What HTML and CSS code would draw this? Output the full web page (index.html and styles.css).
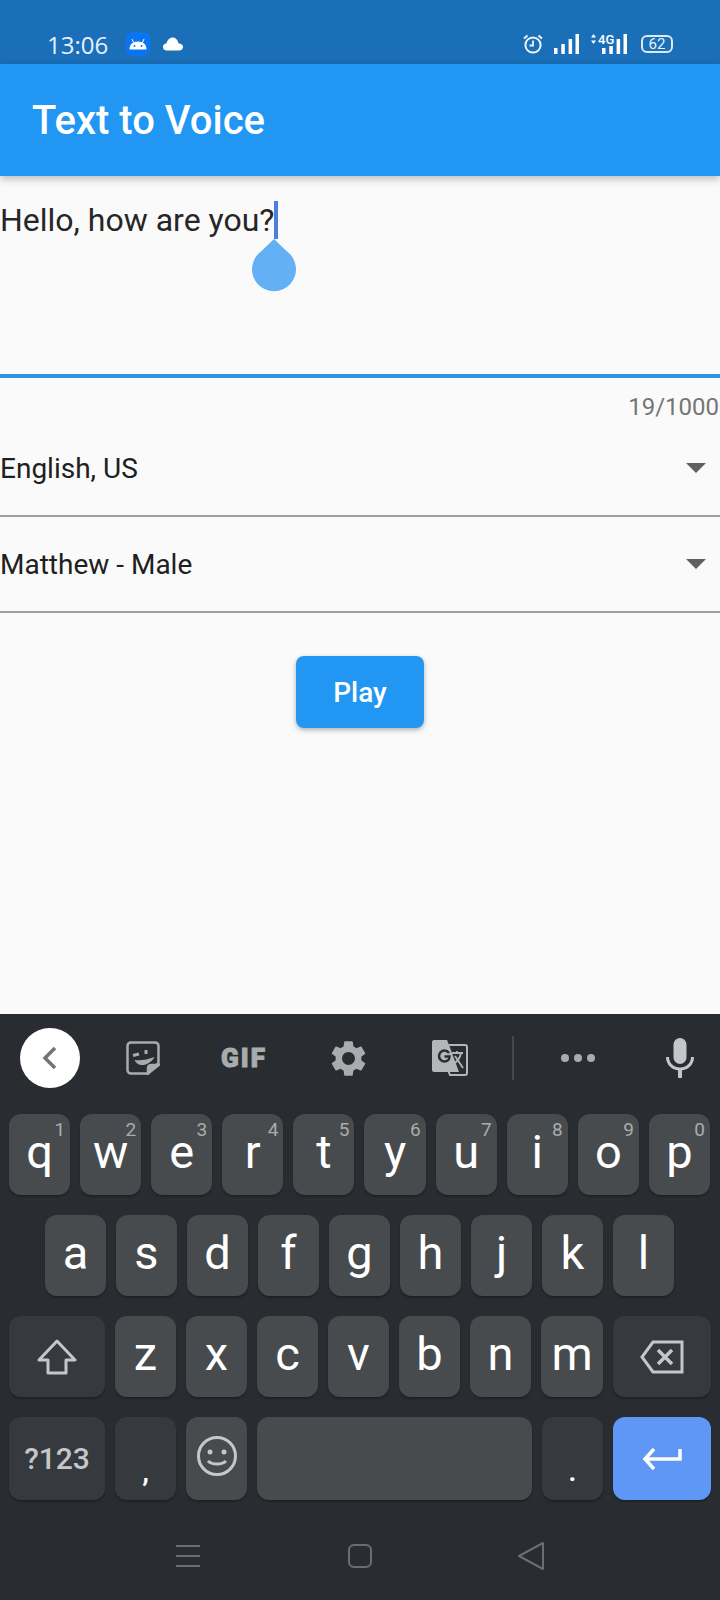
FILE: index.html
```html
<!DOCTYPE html>
<html lang="en">
<head>
    <meta charset="UTF-8">
    <meta name="viewport" content="width=device-width, initial-scale=1.0">
    <title>Text to Voice</title>
    <link rel="stylesheet" href="styles.css">
</head>
<body>
    <div class="status-bar">
        <span class="clock">13:06</span>
        <span class="droid-badge">
            <svg width="18" height="12" viewBox="0 0 18 12"><path d="M0.500 11.500C0.500 6.500 3.500 3.500 9 3.500S17.500 6.500 17.500 11.500Z" fill="#fff"/><path d="M4.500 4.500 3 1M13.500 4.500 15 1" stroke="#fff" stroke-width="1"/><circle cx="5.500" cy="8" r="1" fill="#0b74f1"/><circle cx="12.500" cy="8" r="1" fill="#0b74f1"/></svg>
        </span>
        <svg class="cloud" width="22" height="14" viewBox="0 0 24 16"><path d="M5 15.500C2 15.500 0.500 13.500 0.500 11.500C0.500 9 2 7.500 4.500 7.300C5.500 3 8.500 0.500 11.500 0.500C15 0.500 17.500 3.500 18.300 7.200C21.500 7.500 23.500 9 23.500 11.500C23.500 13.500 21.500 15.500 19 15.500Z" fill="#fff"/></svg>
        <span class="status-right">
            <svg width="20" height="20" viewBox="0 0 20 20" fill="none" stroke="#eef4f9" stroke-width="2"><circle cx="10" cy="11" r="7.600"/><path d="M10 6.500V11.500H6.500" stroke-width="1.800"/><path d="M1 4.500 4.500 1.500M19 4.500 15.500 1.500" stroke-width="2"/></svg>
            <svg class="bars" width="25" height="20" viewBox="0 0 25 20" fill="#fff"><rect x="0" y="14" width="3.500" height="6"/><rect x="7.300" y="10" width="3.500" height="10"/><rect x="14.600" y="5" width="3.500" height="15"/><rect x="21.500" y="0" width="3.500" height="20"/></svg>
            <span class="net">
                <svg class="net-arrows" width="5" height="10" viewBox="0 0 5 10" fill="#fff"><path d="M2.500 0 5 3.500H0Z"/><path d="M2.500 10 5 6.500H0Z"/></svg>
                <span class="net-label">4G</span>
                <svg class="net-bars" width="25" height="20" viewBox="0 0 25 20" fill="#fff"><rect x="0" y="14" width="3.500" height="6"/><rect x="7.300" y="12" width="3.500" height="8"/><rect x="14.600" y="5" width="3.500" height="15"/><rect x="21.500" y="0" width="3.500" height="20"/></svg>
            </span>
            <span class="battery"><span class="battery-level">62</span></span>
        </span>
    </div>

    <header class="app-bar">Text to Voice</header>

    <main class="content">
        <div class="text-field">
            <span class="typed">Hello, how are you?</span>
            <span class="caret"></span>
            <svg class="handle" width="44" height="54" viewBox="0 0 44 54"><path d="M22 0 35 12.500A22 22 0 1 1 9 12.500Z" fill="#64b0f4"/></svg>
        </div>
        <div class="counter">19/1000</div>
        <div class="dropdown"><span>English, US</span><span class="arrow"></span></div>
        <div class="dropdown"><span>Matthew - Male</span><span class="arrow"></span></div>
        <div class="play-row"><button class="play" type="button">Play</button></div>
    </main>

    <section class="keyboard">
        <div class="toolbar">
            <span class="tool"><span class="back-circle">
                <svg width="18" height="26" viewBox="0 0 18 26" fill="none" stroke="#70757a" stroke-width="3.500"><path d="M15 3 5 13 15 23"/></svg>
            </span></span>
            <span class="tool">
                <svg width="34" height="34" viewBox="0 0 34 34" fill="none" stroke="#a9acaf" stroke-width="2.500"><path d="M22 32.500H5C3 32.500 1.500 31 1.500 29V5C1.500 3 3 1.500 5 1.500H29C31 1.500 32.500 3 32.500 5V22Z"/><path d="M22 32.500V27C22 25 24 24 26 24H32.500L22 32.500Z" fill="#a9acaf"/><path d="M7 14.500 13 13M20 9V13" stroke-width="3"/><path d="M8.500 19C14 20 22 18.500 28.500 16C26 21 20 24.500 15 24C12 23.500 10 22 8.500 19Z" fill="#a9acaf" stroke="none"/></svg>
            </span>
            <span class="tool gif">GIF</span>
            <span class="tool">
                <svg width="43" height="43" viewBox="0 0 24 24" fill="#a9acaf"><path d="M19.140 12.940c.040-.300.060-.610.060-.940 0-.320-.020-.640-.070-.940l2.030-1.580c.180-.140.230-.410.120-.610l-1.920-3.320c-.120-.220-.370-.290-.590-.220l-2.390.960c-.500-.380-1.030-.700-1.620-.940l-.360-2.540c-.040-.240-.240-.410-.480-.410h-3.840c-.240 0-.430.170-.470.410l-.360 2.540c-.590.240-1.130.570-1.620.940l-2.390-.960c-.220-.080-.470 0-.590.220L2.740 8.870c-.120.210-.080.470.120.610l2.030 1.580c-.050.300-.090.630-.090.940s.020.640.070.940l-2.030 1.580c-.180.140-.230.410-.120.610l1.920 3.320c.120.220.370.290.590.220l2.390-.960c.500.380 1.030.700 1.620.940l.360 2.540c.050.240.240.410.480.410h3.840c.240 0 .440-.170.470-.410l.360-2.540c.590-.240 1.130-.560 1.620-.940l2.390.960c.220.080.470 0 .590-.220l1.920-3.320c.120-.220.070-.470-.120-.610l-2.010-1.580zM12 15.600c-1.980 0-3.600-1.620-3.600-3.600s1.620-3.600 3.600-3.600 3.600 1.620 3.600 3.600-1.620 3.600-3.600 3.600z"/></svg>
            </span>
            <span class="tool">
                <svg width="36" height="36" viewBox="0 0 36 36"><path d="M2 0H15L17 5 27 32H2C1 32 0 31 0 30V2C0 1 1 0 2 0Z" fill="#b4b7ba"/><path d="M17 5H33C34.500 5 35 6 35 7V33C35 34.500 34.500 35 33 35H18L16 30" fill="none" stroke="#b4b7ba" stroke-width="2"/><path d="M17 13C15.500 11 14 10.500 12.500 10.500C9.500 10.500 7 13 7 16S9.500 21.500 12.500 21.500C15.500 21.500 17.500 19.500 17.500 16.500H12.500" fill="none" stroke="#292d31" stroke-width="2.500"/><path d="M20 13H31M25 11V13M29 13C28 18 25 22 21 24M23 16 31 28" fill="none" stroke="#b4b7ba" stroke-width="1.800"/></svg>
            </span>
            <span class="tool"><span class="tool-divider"></span></span>
            <span class="tool dots"><i></i><i></i><i></i></span>
            <span class="tool tool-mic">
                <svg width="28" height="40" viewBox="0 0 28 40" fill="#c4c7ca"><rect x="7.500" y="0" width="13" height="26" rx="6.500"/><path d="M1.500 19C1.500 26 7 31 14 31S26.500 26 26.500 19" fill="none" stroke="#c4c7ca" stroke-width="3"/><rect x="12" y="30" width="4" height="10"/></svg>
            </span>
        </div>

        <div class="key-row key-row-top">
            <span class="key">q<sup>1</sup></span><span class="key">w<sup>2</sup></span><span class="key">e<sup>3</sup></span><span class="key">r<sup>4</sup></span><span class="key">t<sup>5</sup></span><span class="key">y<sup>6</sup></span><span class="key">u<sup>7</sup></span><span class="key">i<sup>8</sup></span><span class="key">o<sup>9</sup></span><span class="key">p<sup>0</sup></span>
        </div>
        <div class="key-row key-row-inset">
            <span class="key">a</span><span class="key">s</span><span class="key">d</span><span class="key">f</span><span class="key">g</span><span class="key">h</span><span class="key">j</span><span class="key">k</span><span class="key">l</span>
        </div>
        <div class="key-row">
            <span class="key key-shift key-dark">
                <svg width="40" height="36" viewBox="0 0 40 36" fill="none" stroke="#c4c7ca" stroke-width="3" stroke-linejoin="round"><path d="M20 2 38 21H29V34H11V21H2Z"/></svg>
            </span>
            <span class="key">z</span><span class="key">x</span><span class="key">c</span><span class="key">v</span><span class="key">b</span><span class="key">n</span><span class="key key-m">m</span>
            <span class="key key-action key-dark">
                <svg width="44" height="34" viewBox="0 0 44 34" fill="none" stroke="#c4c7ca" stroke-width="3"><path d="M13 2H42V32H13L2 17Z"/><path d="M18 10 32 24M32 10 18 24" stroke-width="3.500"/></svg>
            </span>
        </div>
        <div class="key-row key-row-last">
            <span class="key key-shift key-dark key-label">?123</span>
            <span class="key key-dark key-punct">,</span>
            <span class="key">
                <svg width="40" height="40" viewBox="0 0 40 40" fill="none" stroke="#c4c7ca" stroke-width="3"><circle cx="20" cy="20" r="18.500"/><circle cx="13" cy="16" r="2.500" fill="#c4c7ca" stroke="none"/><circle cx="27" cy="16" r="2.500" fill="#c4c7ca" stroke="none"/><path d="M11 25C15 29 25 29 29 25"/></svg>
            </span>
            <span class="key key-space"></span>
            <span class="key key-dark key-punct">.</span>
            <span class="key key-action key-enter">
                <svg width="40" height="24" viewBox="0 0 40 24" fill="none" stroke="#fff" stroke-width="3.500"><path d="M38 2V12H3M12 2 3 12 12 22"/></svg>
            </span>
        </div>

        <div class="nav-bar">
            <svg width="24" height="22" viewBox="0 0 24 22" fill="#6a6e72"><rect y="0" width="24" height="2"/><rect y="10" width="24" height="2"/><rect y="20" width="24" height="2"/></svg>
            <svg width="24" height="24" viewBox="0 0 24 24" fill="none" stroke="#6a6e72" stroke-width="2"><rect x="1" y="1" width="22" height="22" rx="5"/></svg>
            <svg width="26" height="28" viewBox="0 0 26 28" fill="none" stroke="#6a6e72" stroke-width="2" stroke-linejoin="round"><path d="M25 1V27L1 14Z"/></svg>
        </div>
    </section>
</body>
</html>
```

FILE: styles.css
```css
* {
    box-sizing: border-box;
}

body {
    margin: 0;
    width: 720px;
    height: 1600px;
    overflow: hidden;
    display: flex;
    flex-direction: column;
    font-family: Roboto, sans-serif;
    background: #fafafa;
}

/* status bar */
.status-bar {
    height: 64px;
    flex: none;
    display: flex;
    align-items: center;
    padding: 24px 0 0 47px;
    background: #1a6fb8;
    color: #fff;
}

.clock {
    font-family: "Open Sans", sans-serif;
    font-size: 24px;
    color: #e8f1f8;
}

.droid-badge {
    width: 24px;
    height: 24px;
    margin-left: 18px;
    display: flex;
    align-items: center;
    justify-content: center;
    border-radius: 6px;
    background: #0b74f1;
}

.cloud {
    margin-left: 12px;
}

.status-right {
    margin-left: auto;
    margin-right: 47px;
    display: flex;
    align-items: center;
}

.bars {
    margin-left: 11px;
}

.net {
    position: relative;
    width: 36px;
    height: 20px;
    margin-left: 12px;
}

.net-arrows {
    position: absolute;
    left: 0;
    top: 0;
}

.net-bars {
    position: absolute;
    right: 0;
    top: 0;
}

.net-label {
    position: absolute;
    left: 6px;
    top: -1px;
    padding: 0 1px;
    background: #1a6fb8;
    font-size: 13px;
    line-height: 13px;
    font-weight: 500;
}

.battery {
    width: 32px;
    height: 18px;
    margin-left: 14px;
    display: flex;
    align-items: center;
    justify-content: center;
    border: 2px solid #dfe9f2;
    border-radius: 6px;
    font-size: 15px;
    color: #e8f1f8;
}

/* app bar */
.app-bar {
    height: 112px;
    flex: none;
    display: flex;
    align-items: center;
    padding: 0 0 0 32px;
    background: #2196f3;
    color: #fff;
    font-size: 40px;
    font-weight: 500;
    box-shadow: 0 3px 8px rgba(0, 0, 0, 0.25);
    position: relative;
}

/* form */
.content {
    height: 838px;
    flex: none;
}

.text-field {
    position: relative;
    height: 202px;
    padding-top: 23px;
    border-bottom: 4px solid #2f96e6;
    font-size: 32px;
    color: #262626;
}

.typed {
    line-height: 42px;
}

.caret {
    position: absolute;
    left: 274px;
    top: 25px;
    width: 4px;
    height: 38px;
    background: #4a80dc;
}

.handle {
    position: absolute;
    left: 252px;
    top: 63px;
}

.counter {
    height: 43px;
    padding: 15px 1px 0 0;
    text-align: right;
    font-size: 24px;
    color: #757575;
}

.dropdown {
    height: 96px;
    padding: 0 14px 0 0;
    display: flex;
    align-items: center;
    justify-content: space-between;
    border-bottom: 2px solid #9e9e9e;
    font-size: 28px;
    color: #202020;
}

.arrow {
    width: 0;
    height: 0;
    border-left: 10px solid transparent;
    border-right: 10px solid transparent;
    border-top: 10px solid #5f5f5f;
}

.play-row {
    padding-top: 43px;
    display: flex;
    justify-content: center;
}

.play {
    width: 128px;
    height: 72px;
    border: none;
    border-radius: 8px;
    background: #2196f3;
    color: #fff;
    font-family: Roboto, sans-serif;
    font-size: 28px;
    font-weight: 500;
    box-shadow: 0 2px 5px rgba(0, 0, 0, 0.3);
}

/* keyboard */
.keyboard {
    flex: 1;
    background: #292d31;
}

.toolbar {
    height: 100px;
    display: grid;
    grid-template-columns: 100px 86px 116px 92px 112px 14px 116px 84px;
    align-items: center;
    padding-bottom: 12px;
}

.tool {
    display: flex;
    align-items: center;
    justify-content: center;
}

.tool-mic {
    margin-left: 4px;
}

.back-circle {
    width: 60px;
    height: 60px;
    display: flex;
    align-items: center;
    justify-content: center;
    border-radius: 50%;
    background: #fff;
    padding-right: 2px;
}

.gif {
    font-family: Roboto, sans-serif;
    font-size: 26px;
    font-weight: 900;
    letter-spacing: 2px;
    -webkit-text-stroke: 1px #a9acaf;
    color: #a9acaf;
}

.tool-divider {
    width: 2px;
    height: 44px;
    background: #44494d;
}

.dots {
    gap: 5px;
}

.dots i {
    width: 8px;
    height: 8px;
    border-radius: 50%;
    background: #a9acaf;
}

.key-row {
    display: flex;
    gap: 10px;
    height: 81px;
    margin-bottom: 20px;
    padding: 0 9px;
}

.key-row-top {
    padding: 0 10px 0 9px;
}

.key-row-inset {
    padding: 0 0 0 45px;
}

.key-row-last {
    height: 83px;
    margin-bottom: 0;
}

.key {
    position: relative;
    flex: none;
    width: 61px;
    display: flex;
    align-items: center;
    justify-content: center;
    padding-bottom: 6px;
    border-radius: 12px;
    background: #484b4e;
    color: #fff;
    font-size: 47px;
    box-shadow: 0 2px 2px rgba(0, 0, 0, 0.25);
}

.key-row-top .key {
    flex: 1;
}

.key sup {
    position: absolute;
    top: 6px;
    right: 5px;
    font-size: 19px;
    line-height: 1;
    color: #a9acaf;
}

.key-m {
    width: 62px;
}

.key-shift {
    width: 96px;
    padding-bottom: 0;
}

.key-action {
    width: 98px;
    padding-bottom: 0;
}

.key-dark {
    background: #36393e;
}

.key-label {
    font-size: 30px;
    font-weight: 500;
    color: #c4c7ca;
}

.key-punct {
    padding-top: 24px;
    padding-bottom: 0;
    font-size: 30px;
    font-weight: 500;
}

.key-space {
    width: 275px;
}

.key-enter {
    background: #5e97f6;
}

.nav-bar {
    height: 100px;
    display: grid;
    grid-template-columns: 176px 24px 148px 24px 146px 26px;
    align-items: center;
    padding-top: 12px;
}

.nav-bar svg:nth-child(1) { grid-column: 2; }
.nav-bar svg:nth-child(2) { grid-column: 4; }
.nav-bar svg:nth-child(3) { grid-column: 6; }
```
